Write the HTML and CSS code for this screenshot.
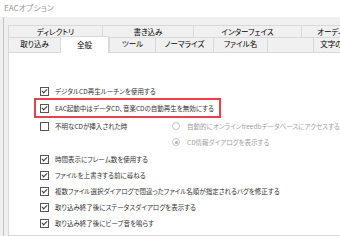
FILE: index.html
```html
<!DOCTYPE html>
<html lang="ja">
<head>
  <meta charset="UTF-8">
  <title>EACオプション</title>
  <link rel="stylesheet" href="styles.css">
</head>
<body>

  <!-- ====== Title Bar ====== -->
  <div class="titlebar">EACオプション</div>

  <div class="frame">
    <!-- ====== Tabs ====== -->
    <div class="tab-row row-back">
      <div class="tab" style="width:94px">ディレクトリ</div>
      <div class="tab" style="width:91px">書き込み</div>
      <div class="tab" style="width:108px">インターフェイス</div>
      <div class="tab" style="width:98px">オーディオプラグイン</div>
    </div>
    <div class="tab-row row-front">
      <div class="tab" style="width:52px">取り込み</div>
      <div class="tab active" style="width:49px">全般</div>
      <div class="tab" style="width:46px">ツール</div>
      <div class="tab" style="width:58px">ノーマライズ</div>
      <div class="tab" style="width:54px">ファイル名</div>
      <div class="tab" style="width:46px"></div>
      <div class="tab" style="width:64px">文字の置き換え</div>
    </div>

    <!-- ====== General Panel ====== -->
    <div class="panel">
      <div class="option">
        <span class="check on"></span>デジタルCD再生ルーチンを使用する
      </div>
      <div class="option highlight">
        <span class="check on"></span>EAC起動中はデータCD、音楽CDの自動再生を無効にする
      </div>
      <div class="option-group">
        <div class="option unknown-cd">
          <span class="check"></span>不明なCDが挿入された時
        </div>
        <div class="radios">
          <div class="radio-line"><span class="radio"></span>自動的にオンラインfreedbデータベースにアクセスする</div>
          <div class="radio-line"><span class="radio on"></span>CD情報ダイアログを表示する</div>
        </div>
      </div>
      <div class="option">
        <span class="check on"></span>時間表示にフレーム数を使用する
      </div>
      <div class="option">
        <span class="check on"></span>ファイルを上書きする前に尋ねる
      </div>
      <div class="option">
        <span class="check on"></span>複数ファイル選択ダイアログで間違ったファイル名順が指定されるバグを修正する
      </div>
      <div class="option">
        <span class="check on"></span>取り込み終了後にステータスダイアログを表示する
      </div>
      <div class="option">
        <span class="check on"></span>取り込み終了後にビープ音を鳴らす
      </div>
    </div>
  </div>

</body>
</html>
```

FILE: styles.css
```css
/* ====== General Styles ====== */
body {
  margin: 0;
  width: 340px;
  height: 236px;
  overflow: hidden;
  background: #f0f0f0;
  font-family: "Noto Sans CJK JP", "Noto Sans", sans-serif;
  font-feature-settings: "palt";
  color: #333;
}

.titlebar {
  height: 17px;
  line-height: 16px;
  padding-left: 4px;
  background: #fff;
  color: #999;
  font-size: 8px;
}

.frame {
  margin-left: 3px;
  border-left: 1px solid #c4c4c4;
  padding-left: 4px;
  padding-top: 8px;
  height: 211px;
  overflow: hidden;
}

/* ====== Tabs ====== */
.tab-row {
  display: flex;
  white-space: nowrap;
}

.tab {
  flex: none;
  box-sizing: border-box;
  text-align: center;
  overflow: hidden;
  font-size: 7.5px;
  color: #000;
  background: #f0f0f0;
  border: 1px solid #d9d9d9;
  border-right: none;
}

.row-back .tab {
  height: 13px;
  line-height: 11px;
}

.row-front {
  position: relative;
  z-index: 1;
}

.row-front .tab {
  height: 14px;
  line-height: 12px;
  border-top: none;
  border-bottom: none;
}

.row-front .tab.active {
  background: #fff;
  height: 17px;
  margin-top: -2px;
  line-height: 16px;
  border: 1px solid #d9d9d9;
  border-bottom: none;
}

.row-front .tab.active + .tab {
  border-left: 1px solid #d9d9d9;
}

.panel {
  background: #fff;
  border: 1px solid #d9d9d9;
  border-right: none;
  margin-top: -1px;
  height: 152px;
  padding: 30px 0 0 31px;
  font-size: 6.5px;
}

/* ====== Options ====== */
.option {
  display: flex;
  align-items: center;
  height: 16px;
  white-space: nowrap;
}

.check {
  width: 7px;
  height: 7px;
  border: 1px solid #555;
  margin-right: 6px;
  position: relative;
  flex: none;
}

.check.on::after {
  content: "";
  position: absolute;
  left: 1px;
  top: 0;
  width: 4px;
  height: 2px;
  border-left: 1px solid #333;
  border-bottom: 1px solid #333;
  transform: translate(0, 1px) rotate(-45deg) scale(1.05, 1);
}

.highlight {
  display: inline-flex;
  border: 2px solid #e8414a;
  height: 16px;
  margin: -1px 0 0 -6px;
  padding: 0 5px 0 4px;
}

.option-group {
  display: flex;
  height: 33px;
}

.unknown-cd {
  flex: none;
  width: 132px;
}

.radios {
  color: #a0a0a0;
}

.radio-line {
  display: flex;
  align-items: center;
  height: 16px;
  white-space: nowrap;
}

.radio {
  flex: none;
  width: 6px;
  height: 6px;
  border: 1px solid #c4c4c4;
  border-radius: 50%;
  margin-right: 7px;
  position: relative;
}

.radio.on::after {
  content: "";
  position: absolute;
  left: 1.5px;
  top: 1.5px;
  width: 3px;
  height: 3px;
  border-radius: 50%;
  background: #b0b0b0;
}
```
